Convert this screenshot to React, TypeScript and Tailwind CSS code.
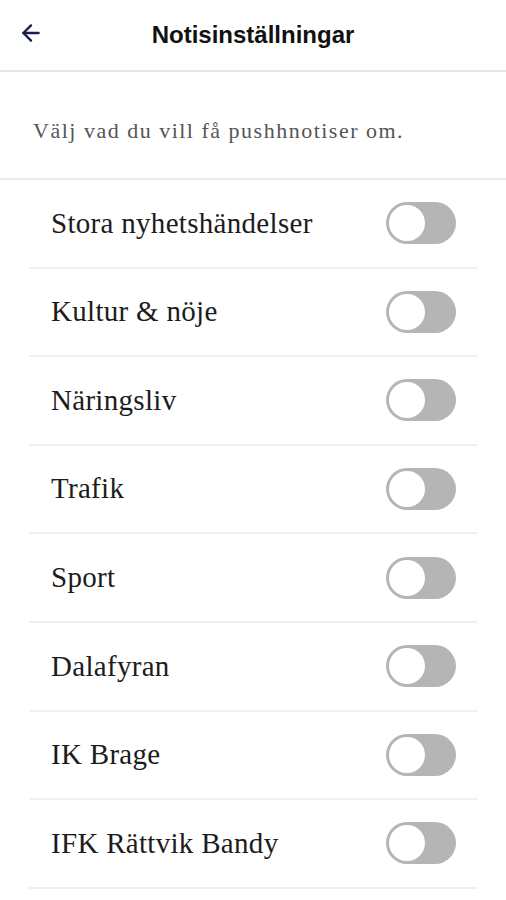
import { ArrowLeft } from "lucide-react";

const topics = [
  "Stora nyhetshändelser",
  "Kultur & nöje",
  "Näringsliv",
  "Trafik",
  "Sport",
  "Dalafyran",
  "IK Brage",
  "IFK Rättvik Bandy",
];

function Toggle() {
  return (
    <div className="flex h-[42px] w-[70px] items-center rounded-full bg-[#b5b5b5] p-[1px]">
      <div className="h-[40px] w-[40px] rounded-full border-2 border-[#b5b5b5] bg-white" />
    </div>
  );
}

export default function App() {
  return (
    <main className="min-h-[900px] w-[506px] bg-white">
      <header className="relative flex h-[72px] items-center justify-center border-b-2 border-[#e6e6e6]">
        <button className="absolute left-[18px] top-[20px] text-[#1b1f4f]">
          <ArrowLeft size={26} strokeWidth={2.2} />
        </button>
        <h1 className="font-['Liberation_Sans',sans-serif] text-[24px] font-bold text-[#111]">
          Notisinställningar
        </h1>
      </header>

      <p className="flex h-[108px] items-center border-b-2 border-[#ececec] pl-[33px] pt-[10px] font-['Liberation_Serif',serif] text-[22px] tracking-[1.5px] text-[#555]">
        Välj vad du vill få pushhnotiser om.
      </p>

      <ul className="px-[29px]">
        {topics.map((t) => (
          <li
            key={t}
            className="flex h-[88.6px] items-center justify-between border-b-2 border-[#efefef] pl-[22px] pr-[21px]"
          >
            <span className="font-['Liberation_Serif',serif] text-[29px] tracking-[0.3px] text-[#1c1c1c]">
              {t}
            </span>
            <Toggle />
          </li>
        ))}
      </ul>
    </main>
  );
}
